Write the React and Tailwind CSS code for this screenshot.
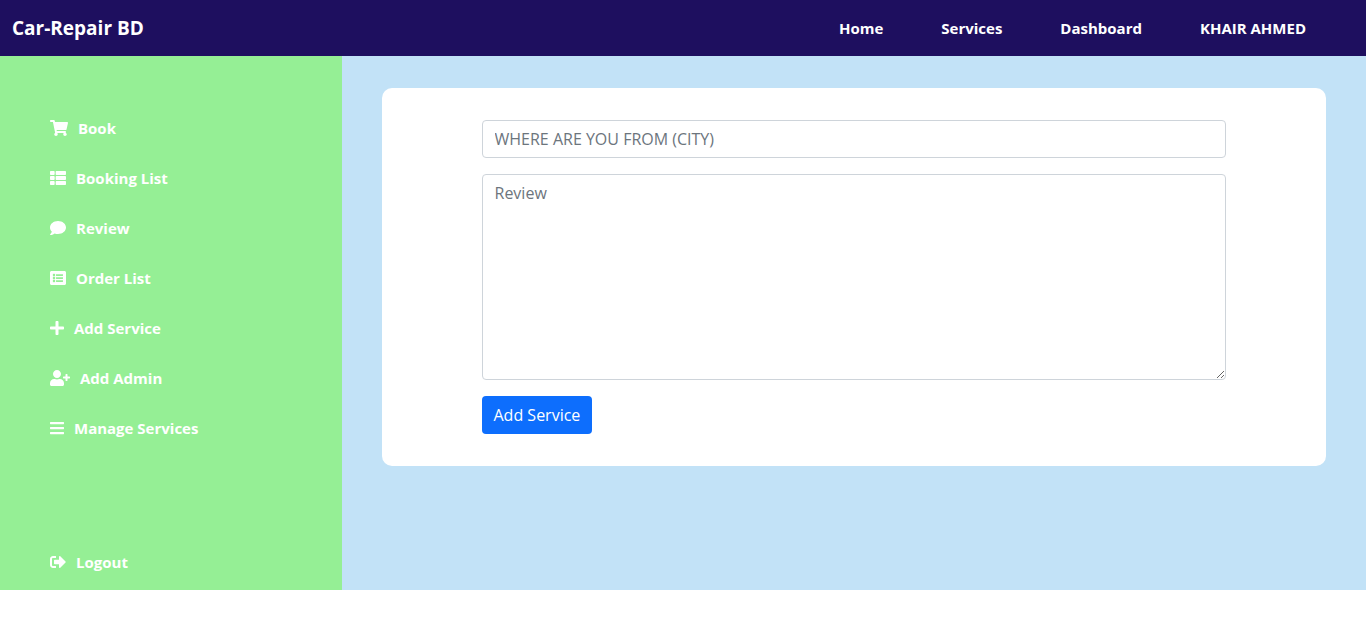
import { FaShoppingCart, FaThList, FaComment, FaListAlt, FaPlus, FaUserPlus, FaBars, FaSignOutAlt } from "react-icons/fa";

const navLinks = ["Home", "Services", "Dashboard", "KHAIR AHMED"];

const menu = [
  { label: "Book", Icon: FaShoppingCart, width: "w-[18px]" },
  { label: "Booking List", Icon: FaThList, width: "w-4" },
  { label: "Review", Icon: FaComment, width: "w-4" },
  { label: "Order List", Icon: FaListAlt, width: "w-4" },
  { label: "Add Service", Icon: FaPlus, width: "w-[14px]" },
  { label: "Add Admin", Icon: FaUserPlus, width: "w-5" },
  { label: "Manage Services", Icon: FaBars, width: "w-[14px]" },
];

function SideLink({ label, Icon, width }) {
  return (
    <a href="#" className="flex items-center gap-[10px] text-white">
      <Icon className={`h-4 ${width}`} aria-hidden="true" />
      {label}
    </a>
  );
}

export default function App() {
  return (
    <div className="font-['Open_Sans','Noto_Sans',sans-serif] text-base leading-6">
      <header className="flex h-14 items-center justify-between bg-[#1e0f5f] pr-[60px] pl-3 font-bold text-white">
        <a href="#" className="text-[19px]">Car-Repair BD</a>
        <nav className="flex gap-[58px] text-[15px]">
          {navLinks.map((link) => (
            <a key={link} href="#">{link}</a>
          ))}
        </nav>
      </header>
      <div className="flex">
        <aside className="w-1/4 bg-[#95ef95] px-[50px] pt-[60px] pb-4 text-[15px] leading-6 font-bold">
          <nav className="flex flex-col gap-[26px]">
            {menu.map((item) => (
              <SideLink key={item.label} {...item} />
            ))}
          </nav>
          <div className="mt-[110px]">
            <SideLink label="Logout" Icon={FaSignOutAlt} width="w-4" />
          </div>
        </aside>
        <main className="flex-1 bg-[#c2e2f7] px-10 pt-8">
          <form className="flex flex-col items-start gap-4 rounded-[10px] bg-white px-[100px] py-8">
            <input
              aria-label="City"
              placeholder="WHERE ARE YOU FROM (CITY)"
              className="h-[38px] w-full rounded border border-[#ced4da] px-3 placeholder:text-[#6c757d]"
            />
            <textarea
              aria-label="Review"
              placeholder="Review"
              rows={8}
              className="block w-full rounded border border-[#ced4da] px-3 py-[6px] placeholder:text-[#6c757d]"
            />
            <button type="button" className="h-[38px] rounded bg-[#0d6efd] px-3 text-white">Add Service</button>
          </form>
        </main>
      </div>
    </div>
  );
}
